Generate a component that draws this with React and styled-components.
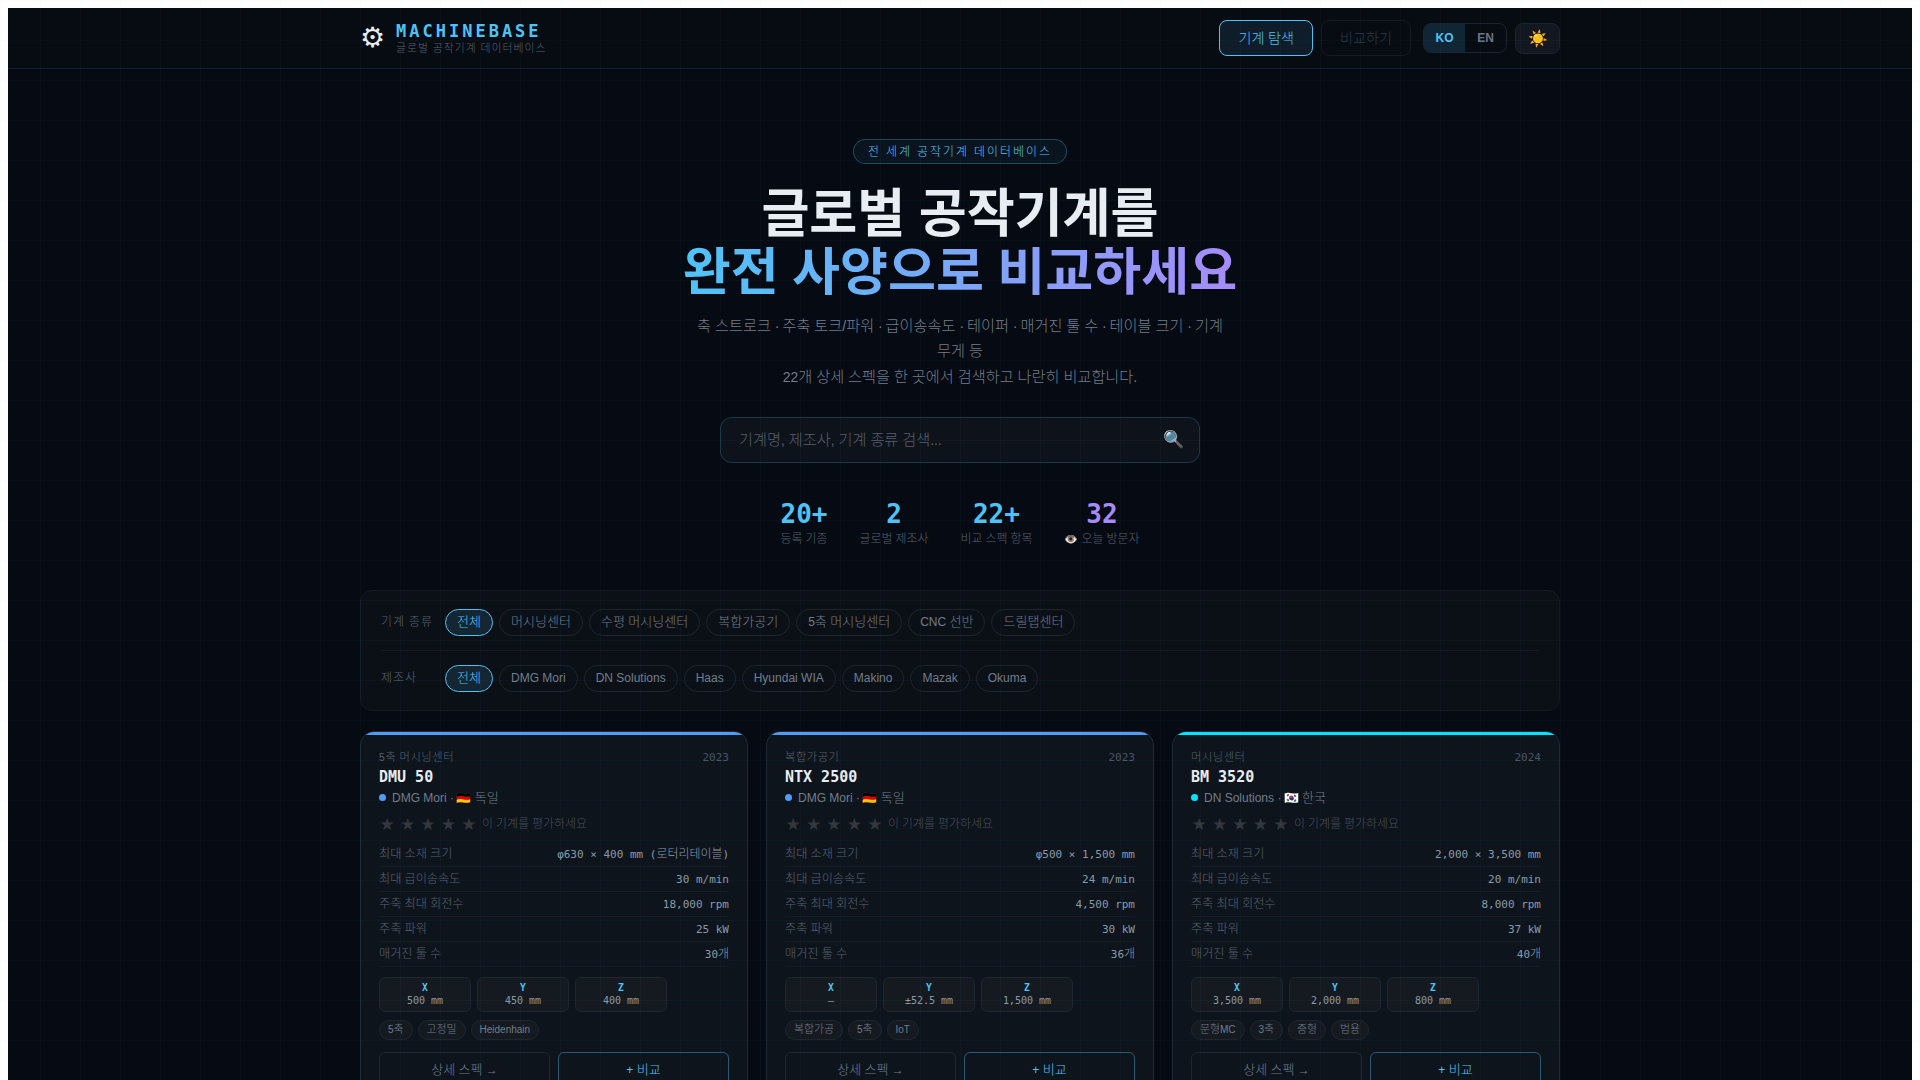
import React from 'react';
import styled, { createGlobalStyle } from 'styled-components';

const SANS = `"Liberation Sans", "Noto Sans CJK KR", sans-serif`;
const MONO = `"DejaVu Sans Mono", "Noto Sans CJK KR", monospace`;

const GlobalStyle = createGlobalStyle`
  body {
    font-family: ${SANS};
    background: #fff;
  }
  body::before {
    content: '';
    position: fixed;
    inset: 0;
    pointer-events: none;
    z-index: 10;
    background-image:
      linear-gradient(rgba(79, 195, 247, 0.03) 1px, transparent 1px),
      linear-gradient(90deg, rgba(79, 195, 247, 0.03) 1px, transparent 1px);
    background-size: 40px 40px;
  }
`;

// hangul runs sit a little larger than the latin around them
const Ko = styled.span`
  font-size: 1.087em;
  font-weight: 300;
  line-height: 0;
`;

const MidDot = styled.span`
  letter-spacing: -1px;
`;

const ko = (text) =>
  text.split(/([가-힣]+|·)/).map((part, i) => {
    if (i % 2 === 0) return part;
    return part === '·' ? <MidDot key={i}>{part}</MidDot> : <Ko key={i}>{part}</Ko>;
  });

const Page = styled.div`
  min-height: 100vh;
  background: #060a12;
  color: #e2e8f0;
`;

const Header = styled.header`
  border-bottom: 1px solid rgba(79, 195, 247, 0.12);
  background: #070b12;
`;

const HeaderInner = styled.div`
  max-width: 1200px;
  margin: 0 auto;
  height: 60px;
  display: flex;
  align-items: center;
  justify-content: space-between;
`;

const Logo = styled.div`
  display: flex;
  align-items: center;
  gap: 11px;
`;

const Gear = styled.span`
  font-size: 28px;
  line-height: 1;
  color: #e8edf4;
`;

const LogoText = styled.div`
  display: flex;
  flex-direction: column;
`;

const LogoTitle = styled.div`
  font-family: ${MONO};
  font-size: 17px;
  font-weight: 700;
  letter-spacing: 3px;
  line-height: 20px;
  color: #4fc3f7;
`;

const LogoSub = styled.div`
  font-size: 10px;
  letter-spacing: 1px;
  line-height: 15px;
  color: #566170;
`;

const Nav = styled.nav`
  display: flex;
  align-items: center;
  gap: 8px;
`;

const NavButton = styled.button`
  height: 36px;
  padding: 0 18px;
  border-radius: 8px;
  font-family: ${SANS};
  font-size: 13px;
  border: 1px solid ${(p) => (p.$active ? '#4fc3f7' : '#141a24')};
  background: ${(p) => (p.$active ? 'rgba(79, 195, 247, 0.1)' : 'transparent')};
  color: ${(p) => (p.$active ? '#4fc3f7' : '#323a46')};
`;

const LangToggle = styled.div`
  display: flex;
  height: 30px;
  box-sizing: border-box;
  margin-left: 4px;
  border: 1px solid #1c2430;
  border-radius: 8px;
  overflow: hidden;
`;

const LangButton = styled.button`
  width: 41px;
  padding: 0;
  border: 0;
  font-family: ${SANS};
  font-size: 12px;
  font-weight: 700;
  background: ${(p) => (p.$active ? 'rgba(79, 195, 247, 0.15)' : 'transparent')};
  color: ${(p) => (p.$active ? '#4fc3f7' : '#6b7684')};
`;

const ThemeButton = styled.button`
  width: 45px;
  height: 31px;
  border: 1px solid #1c2430;
  border-radius: 8px;
  background: #131820;
  font-size: 16px;
  padding: 0;
`;

const Hero = styled.section`
  display: flex;
  flex-direction: column;
  align-items: center;
  padding-top: 70px;
`;

const Badge = styled.div`
  height: 25px;
  box-sizing: border-box;
  padding: 0 14px;
  border-radius: 13px;
  border: 1px solid rgba(79, 195, 247, 0.3);
  background: rgba(79, 195, 247, 0.06);
  color: #4fc3f7;
  font-size: 11px;
  letter-spacing: 2px;
  line-height: 25px;
`;

const Headline = styled.h1`
  margin: 23px 0 0;
  font-size: 48px;
  font-weight: 700;
  line-height: 57.6px;
  text-align: center;
  color: #e8edf4;
  ${Ko} {
    font-weight: 700;
  }
`;

const GradientText = styled.span`
  background: linear-gradient(90deg, #4fc3f7, #a78bfa);
  -webkit-background-clip: text;
  background-clip: text;
  color: transparent;
`;

const Subtitle = styled.p`
  margin: 12px 0 0;
  width: 540px;
  font-size: 14px;
  line-height: 25.2px;
  text-align: center;
  color: #727d8b;
`;

const SearchBox = styled.div`
  margin-top: 27px;
  width: 480px;
  height: 46px;
  padding: 0 15px 0 18px;
  box-sizing: border-box;
  display: flex;
  align-items: center;
  justify-content: space-between;
  border: 1px solid rgba(79, 195, 247, 0.2);
  border-radius: 12px;
  background: #0e131b;
  color: #565f6c;
  font-size: 14px;
`;

const SearchIcon = styled.span`
  font-size: 17px;
`;

const Stats = styled.div`
  margin-top: 35px;
  display: flex;
  justify-content: center;
  gap: 32px;
`;

const Stat = styled.div`
  display: flex;
  flex-direction: column;
  align-items: center;
`;

const StatValue = styled.div`
  font-family: ${MONO};
  font-size: 26px;
  font-weight: 700;
  line-height: 32px;
  color: ${(p) => p.$color};
`;

const StatLabel = styled.div`
  font-size: 11px;
  line-height: 18px;
  color: #566170;
`;

const Main = styled.main`
  max-width: 1200px;
  margin: 42px auto 0;
`;

const FilterPanel = styled.section`
  box-sizing: border-box;
  border: 1px solid #141a24;
  border-radius: 12px;
  background: #0b1017;
  padding: 18px 20px;
`;

const FilterRow = styled.div`
  display: flex;
  align-items: center;
  & + & {
    margin-top: 14px;
    padding-top: 14px;
    border-top: 1px solid #141a24;
  }
`;

const FilterLabel = styled.div`
  width: 64px;
  flex: none;
  font-size: 11px;
  letter-spacing: 1px;
  color: #566170;
`;

const Pills = styled.div`
  display: flex;
  gap: 6px;
`;

const Pill = styled.button`
  height: 27px;
  padding: 0 11px;
  border-radius: 14px;
  font-family: ${SANS};
  font-size: 12px;
  border: 1px solid ${(p) => (p.$active ? '#4fc3f7' : '#1c2430')};
  background: ${(p) => (p.$active ? 'rgba(79, 195, 247, 0.12)' : 'transparent')};
  color: ${(p) => (p.$active ? '#4fc3f7' : '#727d8b')};
`;

const CardGrid = styled.section`
  margin-top: 20px;
  display: grid;
  grid-template-columns: repeat(3, 1fr);
  gap: 18px;
`;

const Card = styled.article`
  position: relative;
  overflow: hidden;
  padding: 18px 18px 18px;
  border: 1px solid #212936;
  border-radius: 14px;
  background: #0e141c;
  &::before {
    content: '';
    position: absolute;
    top: 0;
    left: 0;
    right: 0;
    height: 3px;
    background: ${(p) => p.$accent};
  }
`;

const CardTop = styled.div`
  display: flex;
  justify-content: space-between;
  align-items: center;
  height: 16px;
`;

const CardType = styled.span`
  font-size: 10.4px;
  letter-spacing: 0.5px;
  color: #566170;
`;

const CardYear = styled.span`
  font-family: ${MONO};
  font-size: 11px;
  color: #4a5563;
`;

const CardName = styled.div`
  font-family: ${MONO};
  font-size: 15px;
  font-weight: 700;
  line-height: 22px;
  color: #e8edf4;
`;

const Maker = styled.div`
  display: flex;
  align-items: center;
  gap: 6px;
  font-size: 12px;
  line-height: 20px;
  color: #727d8b;
`;

const Dot = styled.span`
  width: 7px;
  height: 7px;
  border-radius: 50%;
  background: ${(p) => p.$color};
`;

const Rating = styled.div`
  margin-top: 3px;
  display: flex;
  align-items: center;
  height: 26px;
  gap: 4px;
`;

const Star = styled.span`
  width: 16.4px;
  text-align: center;
  font-size: 17px;
  color: #33373d;
  font-family: "DejaVu Sans", sans-serif;
`;

const RatingHint = styled.span`
  margin-left: 1px;
  font-size: 11px;
  color: #464f5b;
`;

const SpecList = styled.div`
  margin-top: 5px;
`;

const SpecRow = styled.div`
  display: flex;
  justify-content: space-between;
  align-items: center;
  height: 23px;
  padding-top: 1px;
  border-bottom: 1px solid #161c26;
`;

const SpecLabel = styled.span`
  font-size: 11.2px;
  color: #566170;
`;

const SpecValue = styled.span`
  font-family: ${MONO};
  font-size: 11px;
  color: #8a9ba8;
`;

const AxisRow = styled.div`
  margin-top: 10px;
  display: flex;
  gap: 6px;
`;

const AxisBox = styled.div`
  box-sizing: border-box;
  width: 92px;
  height: 35px;
  display: flex;
  flex-direction: column;
  align-items: center;
  justify-content: center;
  border: 1px solid #1f2630;
  border-radius: 6px;
  background: #151a21;
`;

const AxisName = styled.span`
  font-family: ${MONO};
  font-size: 9.6px;
  font-weight: 700;
  line-height: 12px;
  color: #4fc3f7;
`;

const AxisValue = styled.span`
  font-family: ${MONO};
  font-size: 10px;
  line-height: 13px;
  color: #8a9ba8;
`;

const Tags = styled.div`
  margin-top: 8px;
  display: flex;
  gap: 5px;
`;

const Tag = styled.span`
  height: 20px;
  box-sizing: border-box;
  padding: 0 8px;
  border: 1px solid #1f2630;
  border-radius: 10px;
  background: #151a21;
  font-size: 10px;
  line-height: 17px;
  color: #727d8b;
`;

const Actions = styled.div`
  margin-top: 12px;
  display: flex;
  gap: 8px;
`;

const ActionButton = styled.button`
  flex: 1;
  height: 34px;
  padding: 2px 0 0;
  border-radius: 6px;
  font-family: ${SANS};
  font-size: 12px;
  background: transparent;
  border: 1px solid ${(p) => (p.$primary ? 'rgba(79, 195, 247, 0.4)' : '#1f2630')};
  color: ${(p) => (p.$primary ? '#4fc3f7' : '#727d8b')};
`;

const TYPES = ['전체', '머시닝센터', '수평 머시닝센터', '복합가공기', '5축 머시닝센터', 'CNC 선반', '드릴탭센터'];
const MAKERS = ['전체', 'DMG Mori', 'DN Solutions', 'Haas', 'Hyundai WIA', 'Makino', 'Mazak', 'Okuma'];
const SPEC_LABELS = ['최대 소재 크기', '최대 급이송속도', '주축 최대 회전수', '주축 파워', '매거진 툴 수'];

const MACHINES = [
  {
    type: '5축 머시닝센터',
    year: '2023',
    name: 'DMU 50',
    maker: 'DMG Mori · 🇩🇪 독일',
    accent: '#4f9cf9',
    specs: ['φ630 × 400 mm (로터리테이블)', '30 m/min', '18,000 rpm', '25 kW', '30개'],
    axes: [['X', '500 mm'], ['Y', '450 mm'], ['Z', '400 mm']],
    tags: ['5축', '고정밀', 'Heidenhain'],
  },
  {
    type: '복합가공기',
    year: '2023',
    name: 'NTX 2500',
    maker: 'DMG Mori · 🇩🇪 독일',
    accent: '#4f9cf9',
    specs: ['φ500 × 1,500 mm', '24 m/min', '4,500 rpm', '30 kW', '36개'],
    axes: [['X', '—'], ['Y', '±52.5 mm'], ['Z', '1,500 mm']],
    tags: ['복합가공', '5축', 'IoT'],
  },
  {
    type: '머시닝센터',
    year: '2024',
    name: 'BM 3520',
    maker: 'DN Solutions · 🇰🇷 한국',
    accent: '#00e5ff',
    specs: ['2,000 × 3,500 mm', '20 m/min', '8,000 rpm', '37 kW', '40개'],
    axes: [['X', '3,500 mm'], ['Y', '2,000 mm'], ['Z', '800 mm']],
    tags: ['문형MC', '3축', '중형', '범용'],
  },
];

const STATS = [
  ['20+', '등록 기종', '#4fc3f7'],
  ['2', '글로벌 제조사', '#4fc3f7'],
  ['22+', '비교 스펙 항목', '#4fc3f7'],
  ['32', '👁️ 오늘 방문자', '#a78bfa'],
];

const MachineCard = ({ machine }) => (
  <Card $accent={machine.accent}>
    <CardTop>
      <CardType>{ko(machine.type)}</CardType>
      <CardYear>{machine.year}</CardYear>
    </CardTop>
    <CardName>{machine.name}</CardName>
    <Maker>
      <Dot $color={machine.accent} />
      <span>{ko(machine.maker)}</span>
    </Maker>
    <Rating>
      {[1, 2, 3, 4, 5].map((n) => (
        <Star key={n}>★</Star>
      ))}
      <RatingHint>{ko('이 기계를 평가하세요')}</RatingHint>
    </Rating>
    <SpecList>
      {SPEC_LABELS.map((label, i) => (
        <SpecRow key={label}>
          <SpecLabel>{ko(label)}</SpecLabel>
          <SpecValue>{ko(machine.specs[i])}</SpecValue>
        </SpecRow>
      ))}
    </SpecList>
    <AxisRow>
      {machine.axes.map(([axis, value]) => (
        <AxisBox key={axis}>
          <AxisName>{axis}</AxisName>
          <AxisValue>{value}</AxisValue>
        </AxisBox>
      ))}
    </AxisRow>
    <Tags>
      {machine.tags.map((tag) => (
        <Tag key={tag}>{ko(tag)}</Tag>
      ))}
    </Tags>
    <Actions>
      <ActionButton>{ko('상세 스펙 →')}</ActionButton>
      <ActionButton $primary>{ko('+ 비교')}</ActionButton>
    </Actions>
  </Card>
);

const App = () => (
  <Page>
    <GlobalStyle />
    <Header>
      <HeaderInner>
        <Logo>
          <Gear>⚙</Gear>
          <LogoText>
            <LogoTitle>MACHINEBASE</LogoTitle>
            <LogoSub>{ko('글로벌 공작기계 데이터베이스')}</LogoSub>
          </LogoText>
        </Logo>
        <Nav>
          <NavButton $active>{ko('기계 탐색')}</NavButton>
          <NavButton>{ko('비교하기')}</NavButton>
          <LangToggle>
            <LangButton $active>KO</LangButton>
            <LangButton>EN</LangButton>
          </LangToggle>
          <ThemeButton>☀️</ThemeButton>
        </Nav>
      </HeaderInner>
    </Header>
    <Hero>
      <Badge>{ko('전 세계 공작기계 데이터베이스')}</Badge>
      <Headline>
        {ko('글로벌 공작기계를')}
        <br />
        <GradientText>{ko('완전 사양으로 비교하세요')}</GradientText>
      </Headline>
      <Subtitle>
        {ko('축 스트로크 · 주축 토크/파워 · 급이송속도 · 테이퍼 · 매거진 툴 수 · 테이블 크기 · 기계 무게 등')}
        <br />
        {ko('22개 상세 스펙을 한 곳에서 검색하고 나란히 비교합니다.')}
      </Subtitle>
      <SearchBox>
        <span>{ko('기계명, 제조사, 기계 종류 검색...')}</span>
        <SearchIcon>🔍</SearchIcon>
      </SearchBox>
      <Stats>
        {STATS.map(([value, label, color]) => (
          <Stat key={label}>
            <StatValue $color={color}>{value}</StatValue>
            <StatLabel>{ko(label)}</StatLabel>
          </Stat>
        ))}
      </Stats>
    </Hero>
    <Main>
      <FilterPanel>
        <FilterRow>
          <FilterLabel>{ko('기계 종류')}</FilterLabel>
          <Pills>
            {TYPES.map((t, i) => (
              <Pill key={t} $active={i === 0}>{ko(t)}</Pill>
            ))}
          </Pills>
        </FilterRow>
        <FilterRow>
          <FilterLabel>{ko('제조사')}</FilterLabel>
          <Pills>
            {MAKERS.map((m, i) => (
              <Pill key={m} $active={i === 0}>{ko(m)}</Pill>
            ))}
          </Pills>
        </FilterRow>
      </FilterPanel>
      <CardGrid>
        {MACHINES.map((m) => (
          <MachineCard key={m.name} machine={m} />
        ))}
      </CardGrid>
    </Main>
  </Page>
);

export default App;
